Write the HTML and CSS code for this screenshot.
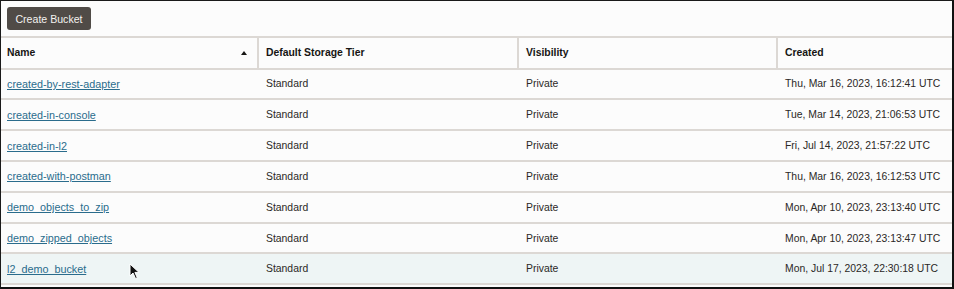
FILE: index.html
```html
<!DOCTYPE html>
<html lang="en">
<head>
  <meta charset="UTF-8" />
  <title>Buckets</title>
  <link rel="stylesheet" href="styles.css">
</head>
<body>
<div class="frame">
  <div class="toolbar">
    <button class="btn">Create Bucket</button>
  </div>
  <div class="table">
    <div class="row head">
      <div class="cell">Name <span class="sort"></span></div>
      <div class="cell">Default Storage Tier</div>
      <div class="cell">Visibility</div>
      <div class="cell">Created</div>
    </div>
    <div class="row">
      <div class="cell"><a href="#">created-by-rest-adapter</a></div>
      <div class="cell">Standard</div>
      <div class="cell">Private</div>
      <div class="cell">Thu, Mar 16, 2023, 16:12:41 UTC</div>
    </div>
    <div class="row">
      <div class="cell"><a href="#">created-in-console</a></div>
      <div class="cell">Standard</div>
      <div class="cell">Private</div>
      <div class="cell">Tue, Mar 14, 2023, 21:06:53 UTC</div>
    </div>
    <div class="row">
      <div class="cell"><a href="#">created-in-l2</a></div>
      <div class="cell">Standard</div>
      <div class="cell">Private</div>
      <div class="cell">Fri, Jul 14, 2023, 21:57:22 UTC</div>
    </div>
    <div class="row">
      <div class="cell"><a href="#">created-with-postman</a></div>
      <div class="cell">Standard</div>
      <div class="cell">Private</div>
      <div class="cell">Thu, Mar 16, 2023, 16:12:53 UTC</div>
    </div>
    <div class="row">
      <div class="cell"><a href="#">demo_objects_to_zip</a></div>
      <div class="cell">Standard</div>
      <div class="cell">Private</div>
      <div class="cell">Mon, Apr 10, 2023, 23:13:40 UTC</div>
    </div>
    <div class="row">
      <div class="cell"><a href="#">demo_zipped_objects</a></div>
      <div class="cell">Standard</div>
      <div class="cell">Private</div>
      <div class="cell">Mon, Apr 10, 2023, 23:13:47 UTC</div>
    </div>
    <div class="row hover">
      <div class="cell"><a href="#">l2_demo_bucket</a></div>
      <div class="cell">Standard</div>
      <div class="cell">Private</div>
      <div class="cell">Mon, Jul 17, 2023, 22:30:18 UTC</div>
      <svg class="cursor" width="11" height="17" viewBox="0 0 11 17"><path d="M1 1 L1 13 L4 10 L6.5 15.5 L8.3 14.7 L5.9 9.4 L10 9.4 Z" fill="#111" stroke="#fff" stroke-width="1"/></svg>
    </div>
  </div>
</div>
</body>
</html>
```

FILE: styles.css
```css
* { margin: 0; padding: 0; box-sizing: border-box; }
html, body {
  height: 100%; overflow: hidden;
  font-family: 'Liberation Sans', Arial, Helvetica, sans-serif;
  background: #fff;
  color: #2b2826;
}

.frame {
  height: 289px;
  border-left: 1px solid #1a1a1a;
  border-top: 1px solid #1a1a1a;
  border-right: 2px solid #111;
  border-bottom: 2px solid #111;
  background: #fcfcfc;
}

.toolbar {
  height: 37px;
  padding: 6px 6px 0;
  border-bottom: 2px solid #dcd8d4;
}

.btn {
  height: 23px;
  width: 84px;
  border: none;
  border-radius: 3px;
  background: #504b47;
  color: #f4f2f0;
  font-family: inherit;
  font-size: 10.6px;
}

.row {
  position: relative;
  display: grid;
  grid-template-columns: 256px 260px 259px 1fr;
  height: 30.83px;
  border-bottom: 2px solid #dcd8d4;
  font-size: 10.4px;
}

.row.head {
  height: 31.5px;
  font-weight: bold;
  color: #161513;
}

.row.head .cell + .cell { border-left: 2px solid #dcd8d4; }
.row .cell + .cell { padding-left: 9px; }
.row.head .cell + .cell { padding-left: 7px; }

.row.hover { background: #eef5f5; }

.cell {
  display: flex;
  align-items: center;
  padding: 0 8px 0 6px;
  white-space: nowrap;
}

.head .cell:first-child { justify-content: space-between; padding-right: 10px; }

.sort {
  width: 0; height: 0;
  border-left: 3.5px solid transparent;
  border-right: 3.5px solid transparent;
  border-bottom: 4px solid #161513;
}

a {
  color: #2a6c8c;
  font-size: 10.8px;
  text-decoration: underline;
  text-underline-offset: 1px;
}

.cursor {
  position: absolute;
  left: 128px;
  top: 9px;
}
```
